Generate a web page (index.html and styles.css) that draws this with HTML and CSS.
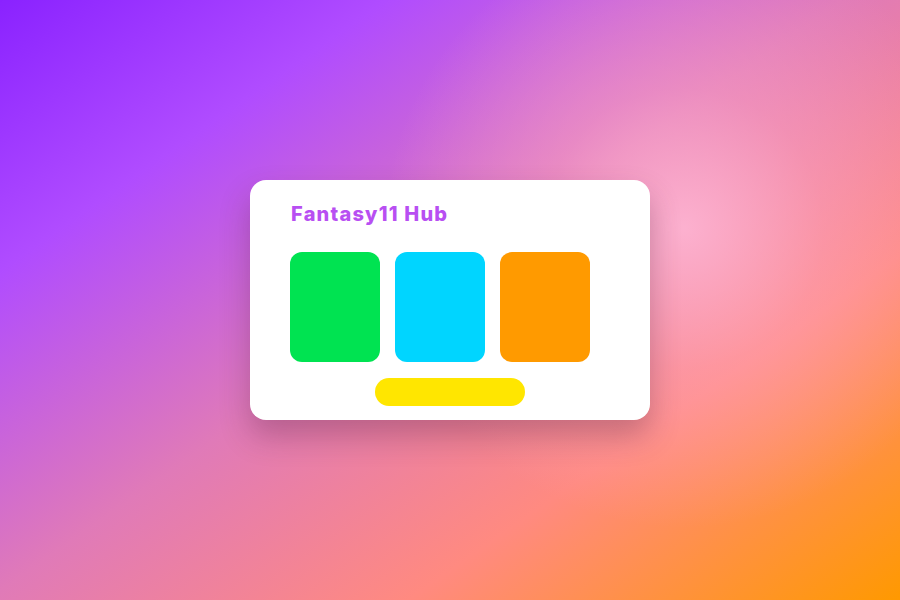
FILE: index.html
```html
<!DOCTYPE html>
<html>
<head>
<meta charset="utf-8">
<link rel="stylesheet" href="styles.css">
</head>
<body>
<main class="stage">
  <section class="card">
    <h1 class="title">Fantasy11 Hub</h1>
    <div class="tiles">
      <div class="tile tile-green"></div>
      <div class="tile tile-blue"></div>
      <div class="tile tile-orange"></div>
    </div>
    <div class="bar"></div>
  </section>
</main>
</body>
</html>
```
FILE: styles.css
```css
html, body {
  margin: 0;
  padding: 0;
  width: 900px;
  height: 600px;
  overflow: hidden;
}
body {
  font-family: Inter, "Liberation Sans", sans-serif;
}
.stage {
  width: 900px;
  height: 600px;
  display: flex;
  align-items: center;
  justify-content: center;
  background:
    radial-gradient(circle at 76% 38%, rgba(255, 185, 215, 0.85) 0, rgba(255, 170, 200, 0.4) 140px, rgba(255, 160, 190, 0) 300px),
    linear-gradient(145deg, #8a22ff 0%, #b04cff 22%, #e07ab8 48%, #ff8a80 72%, #ff9900 100%);
}
.card {
  box-sizing: border-box;
  width: 400px;
  height: 240px;
  background: #ffffff;
  border-radius: 16px;
  padding: 22px 41px 14px 41px;
  box-shadow: 0 16px 30px rgba(80, 30, 60, 0.3);
  display: flex;
  flex-direction: column;
}
.title {
  margin: 0;
  font-size: 20px;
  line-height: 24px;
  font-weight: 800;
  color: #b84ff2;
  letter-spacing: 1.2px;
}
.tiles {
  display: flex;
  gap: 15px;
  margin-top: 26px;
  margin-left: -1px;
}
.tile {
  width: 90px;
  height: 110px;
  border-radius: 12px;
}
.tile-green { background: #00e351; }
.tile-blue { background: #00d5ff; }
.tile-orange { background: #ff9a00; }
.bar {
  align-self: center;
  width: 150px;
  height: 28px;
  margin-top: 16px;
  border-radius: 14px;
  background: #ffe600;
}
```
